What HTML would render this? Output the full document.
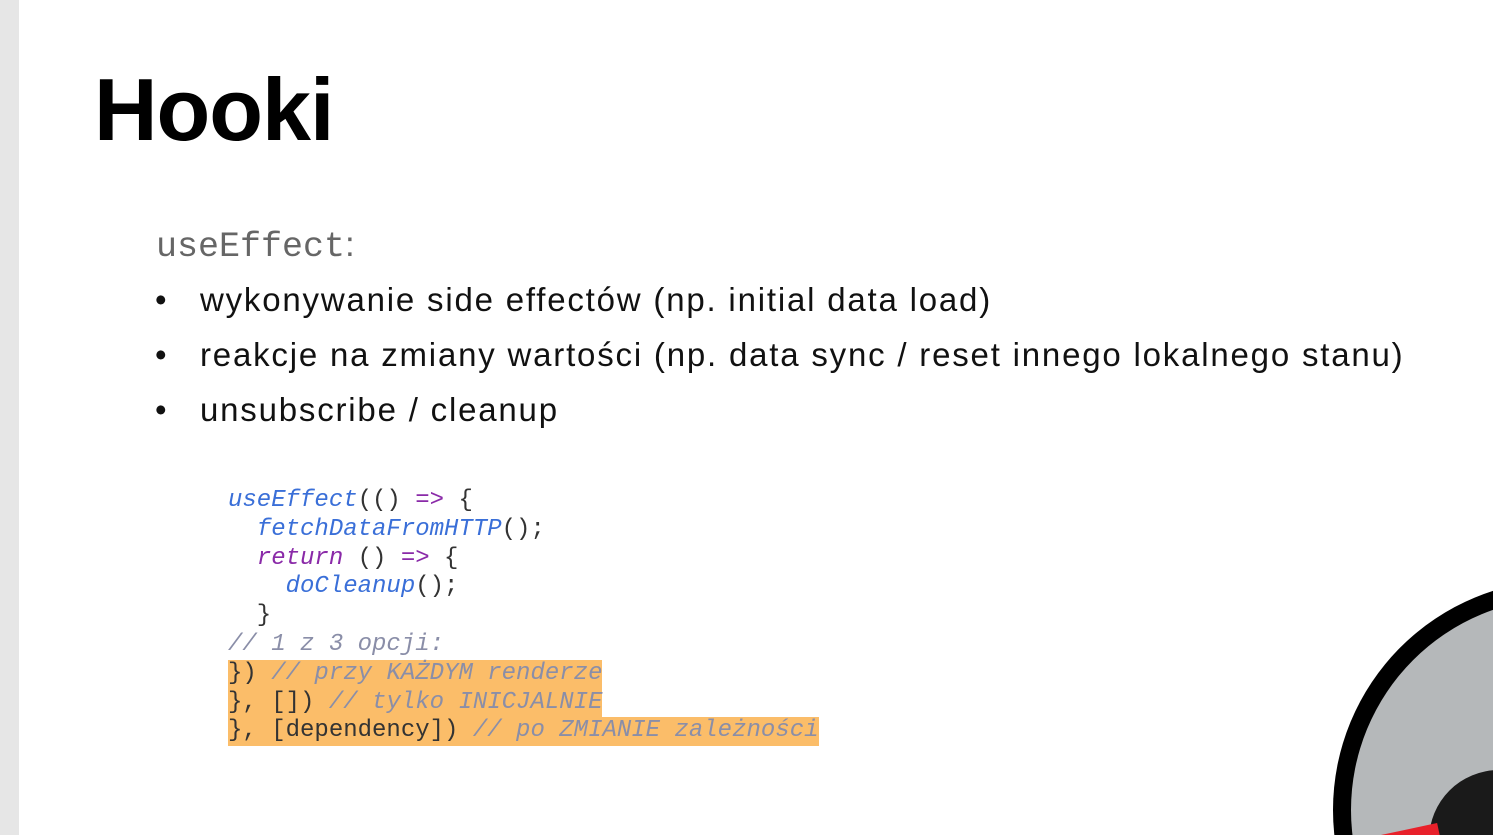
<!DOCTYPE html>
<html><head><meta charset="utf-8"><style>
html,body{margin:0;padding:0;width:1493px;height:835px;overflow:hidden}
body{background:#fff;font-family:"Liberation Sans",sans-serif}
.frame{position:relative;width:1493px;height:835px;overflow:hidden}
.strip{position:absolute;left:0;top:0;width:19px;height:835px;background:#e6e6e6}
h1{position:absolute;left:94px;top:60px;margin:0;font-size:88px;font-weight:bold;color:#000;letter-spacing:-1px;line-height:100px}
.ue{position:absolute;left:156px;top:225px;font-family:"Liberation Mono",monospace;font-size:35px;color:#666;line-height:40px}
ul{position:absolute;left:155px;top:278px;margin:0;padding:0;list-style:none;font-size:33px;letter-spacing:1.8px;color:#111;white-space:nowrap}
li{height:55px;line-height:44px;position:relative;padding-left:45px}
li:before{content:"•";position:absolute;left:0}
.code{position:absolute;left:228px;top:487px;font-family:"Liberation Mono",monospace;font-size:24px;line-height:28.8px;color:#333;white-space:pre}
.code div{height:28.8px}
.b{color:#3a6fd8;font-style:italic}
.p{color:#8a2aa8}
.pi{color:#8a2aa8;font-style:italic}
.c{color:#8a8ea8;font-style:italic}
.hl{background:#fbbd69;display:inline-block}
.circ{position:absolute;left:1333px;top:580px;width:460px;height:460px;border-radius:50%;background:#000;overflow:hidden}
.inner{position:absolute;left:18px;top:18px;width:424px;height:424px;border-radius:50%;background:#b5b8ba;overflow:hidden}
.shirt{position:absolute;left:78px;top:172px;width:300px;height:300px;border-radius:70px 0 0 0;background:#1a1a1a}
.red{position:absolute;left:20px;top:232px;width:70px;height:30px;background:#e8202a;transform:rotate(-12deg)}
</style></head><body><div class="frame">
<div class="strip"></div>
<h1>Hooki</h1>
<div class="ue">useEffect<span style="font-family:'Liberation Sans',sans-serif">:</span></div>
<ul>
<li>wykonywanie side effectów (np. initial data load)</li>
<li>reakcje na zmiany wartości (np. data sync / reset innego lokalnego stanu)</li>
<li>unsubscribe / cleanup</li>
</ul>
<div class="code"><div><span class="b">useEffect</span>(() <span class="p">=&gt;</span> {</div><div>  <span class="b">fetchDataFromHTTP</span>();</div><div>  <span class="pi">return</span> () <span class="p">=&gt;</span> {</div><div>    <span class="b">doCleanup</span>();</div><div>  }</div><div><span class="c">// 1 z 3 opcji:</span></div><div><span class="hl">}) <span class="c">// przy KAŻDYM renderze</span></span></div><div><span class="hl">}, []) <span class="c">// tylko INICJALNIE</span></span></div><div><span class="hl">}, [dependency]) <span class="c">// po ZMIANIE zależności</span></span></div></div>
<div class="circ"><div class="inner"><div class="shirt"></div><div class="red"></div></div></div>
</div></body></html>
